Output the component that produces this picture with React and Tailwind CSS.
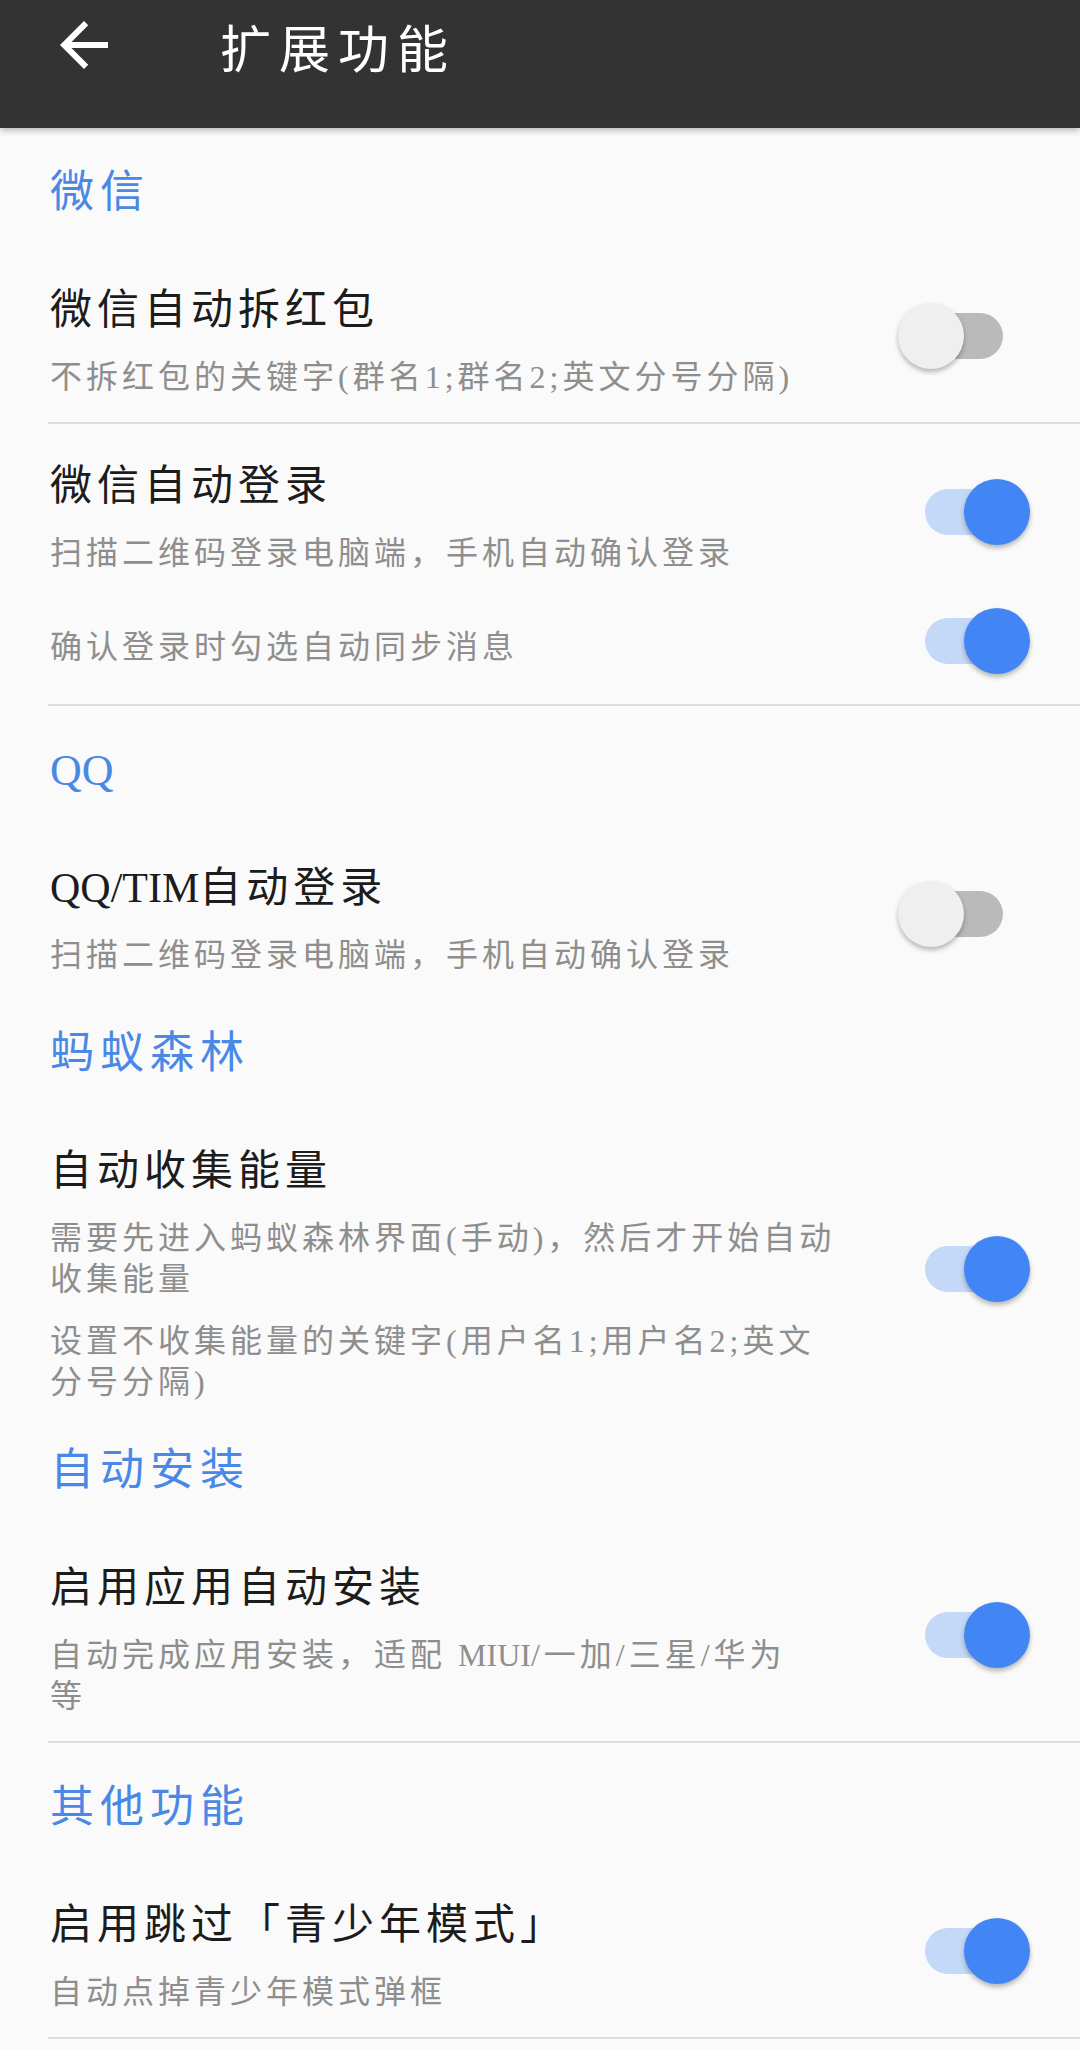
import React from "react";

const font = "font-['Liberation_Serif','Noto_Sans_CJK_SC',serif]";

const Toggle = ({ on, className = "" }) => (
  <div className={`relative w-[132px] h-[66px] shrink-0 ${className}`}>
    <div
      className={`absolute left-[27px] top-[10px] w-[78px] h-[46px] rounded-full ${
        on ? "bg-[#c4d8f8]" : "bg-[#bababa]"
      }`}
    />
    <div
      className={`absolute top-0 w-[66px] h-[66px] rounded-full shadow-[0_3px_5px_rgba(0,0,0,0.28)] ${
        on ? "left-[66px] bg-[#4285f4]" : "left-0 bg-[#efefef]"
      }`}
    />
  </div>
);

const Category = ({ title, className }) => (
  <div
    className={`pl-[50px] h-[56px] leading-[56px] text-[44px] tracking-[6px] text-[#4a88e6] ${className}`}
  >
    {title}
  </div>
);

// latin runs in the original font are narrow, so no extra spacing on them
const Latin = ({ children }) => <span className="tracking-normal">{children}</span>;

const Summary = ({ lines, className = "" }) => (
  <p className={`text-[32px] leading-[41px] tracking-[4px] text-[#8e8e8e] whitespace-nowrap ${className}`}>
    {lines.map((l, i) => (
      <React.Fragment key={i}>
        {i > 0 && <br />}
        {l}
      </React.Fragment>
    ))}
  </p>
);

const Row = ({
  title,
  summaries,
  on,
  className = "pt-[36px] pb-[25px]",
  toggleClass = "-translate-y-[5px]",
}) => (
  <div className={`flex items-center pl-[50px] pr-[50px] ${className}`}>
    <div className="flex-1 min-w-0">
      {title && (
        <p className="text-[42px] leading-[52px] tracking-[5px] text-[#1c1c1c]">{title}</p>
      )}
      {summaries.map((s, i) => (
        <Summary key={i} lines={s} className={title || i > 0 ? "mt-[21px]" : ""} />
      ))}
    </div>
    <Toggle on={on} className={toggleClass} />
  </div>
);

const Divider = () => <div className="ml-[48px] h-[2px] bg-[#dddddd]" />;

export default function App() {
  return (
    <div className={`w-[1080px] min-h-[2049px] bg-[#fafafa] ${font}`}>
      <div className="relative z-10 h-[128px] bg-[#333333] flex items-start shadow-[0_2px_7px_rgba(0,0,0,0.3)]">
        <svg
          viewBox="0 0 24 24"
          className="w-[72px] h-[72px] ml-[48px] mt-[9px] fill-white"
        >
          <path d="M20 11H7.83l5.59-5.59L12 4l-8 8 8 8 1.41-1.41L7.83 13H20v-2z" />
        </svg>
        <h1 className="ml-[100px] mt-[21px] text-[51px] leading-[60px] tracking-[8px] text-white font-normal">
          扩展功能
        </h1>
      </div>

      <Category title="微信" className="mt-[37px]" />
      <Row
        className="mt-[27px] pt-[36px] pb-[24px]"
        title="微信自动拆红包"
        summaries={[["不拆红包的关键字(群名1;群名2;英文分号分隔)"]]}
        on={false}
      />
      <Divider />
      <Row
        className="pt-[36px] pb-[26px]"
        title="微信自动登录"
        summaries={[["扫描二维码登录电脑端，手机自动确认登录"]]}
        on={true}
      />
      <Row
        className="pt-[27px] pb-[14px]"
        toggleClass="-mt-[20px] -mb-[6px]"
        summaries={[["确认登录时勾选自动同步消息"]]}
        on={true}
      />
      <div className="h-[22px]" />
      <Divider />

      <Category title={<Latin>QQ</Latin>} className="mt-[37px]" />
      <Row
        className="mt-[27px] pt-[36px] pb-[28px]"
        title={
          <>
            <Latin>QQ/TIM</Latin>自动登录
          </>
        }
        summaries={[["扫描二维码登录电脑端，手机自动确认登录"]]}
        on={false}
      />

      <Category title="蚂蚁森林" className="mt-[22px]" />
      <Row
        className="mt-[27px] pt-[36px] pb-[30px]"
        title="自动收集能量"
        summaries={[
          ["需要先进入蚂蚁森林界面(手动)，然后才开始自动", "收集能量"],
          ["设置不收集能量的关键字(用户名1;用户名2;英文", "分号分隔)"],
        ]}
        on={true}
      />

      <Category title="自动安装" className="mt-[10px]" />
      <Row
        className="mt-[27px] pt-[36px] pb-[24px]"
        title="启用应用自动安装"
        summaries={[
          [
            <>
              自动完成应用安装，适配 <Latin>MIUI</Latin>/一加/三星/华为
            </>,
            "等",
          ],
        ]}
        on={true}
      />
      <Divider />

      <Category title="其他功能" className="mt-[37px]" />
      <Row
        className="mt-[27px] pt-[36px] pb-[24px]"
        title="启用跳过「青少年模式」"
        summaries={[["自动点掉青少年模式弹框"]]}
        on={true}
      />
      <Divider />
    </div>
  );
}
